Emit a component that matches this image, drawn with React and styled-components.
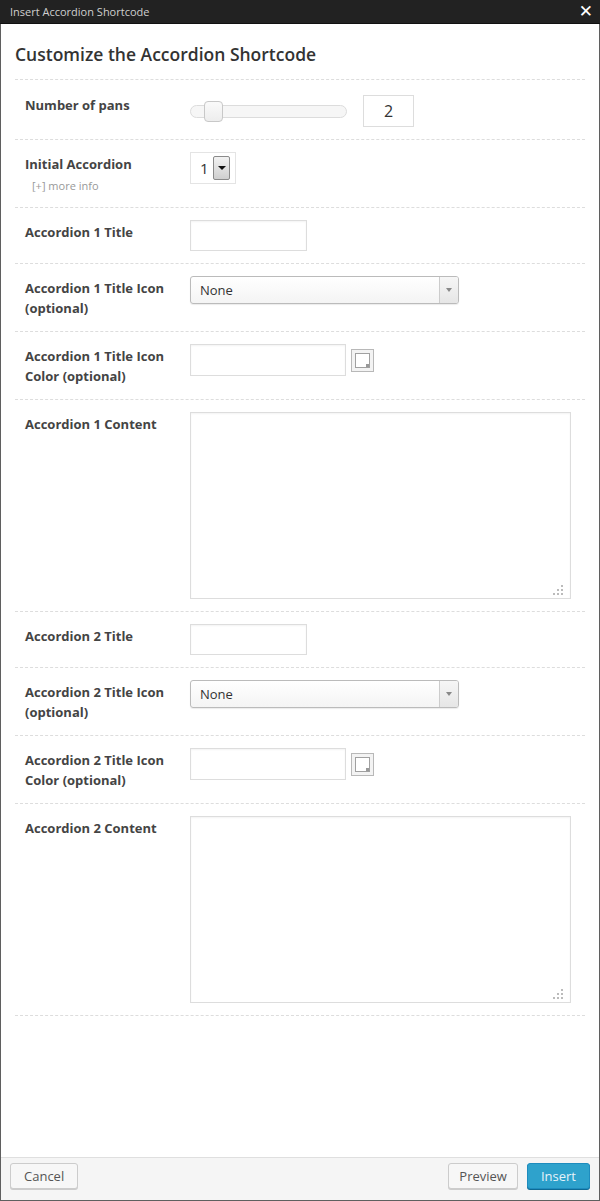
import React from "react";
import styled, { createGlobalStyle } from "styled-components";

const GlobalStyle = createGlobalStyle`
  html, body {
    margin: 0;
    padding: 0;
    background: #fff;
  }
  * {
    box-sizing: border-box;
  }
`;

const Dialog = styled.div`
  width: 600px;
  height: 1201px;
  display: flex;
  flex-direction: column;
  border: 1px solid #5f5f5f;
  border-top: none;
  font-family: "Open Sans", "Liberation Sans", sans-serif;
  background: #fff;
`;

const TitleBar = styled.div`
  height: 24px;
  margin: 0 -1px;
  background: #222;
  border-bottom: 1px solid #111;
  display: flex;
  align-items: center;
  justify-content: space-between;
  padding: 0 7px 0 10px;
  color: #cfcfcf;
  font-size: 11px;
`;

const Close = styled.span`
  color: #fff;
  font-weight: 700;
  font-size: 17px;
  line-height: 1;
  font-family: "DejaVu Sans", sans-serif;
`;

const Body = styled.div`
  flex: 1;
  padding: 0 14px;
`;

const Heading = styled.h1`
  margin: 17px 0 12px;
  font-size: 17.5px;
  line-height: 26px;
  font-weight: 600;
  color: #333;
`;

const Row = styled.div`
  display: flex;
  align-items: flex-start;
  padding: ${(p) => (p.$top ? p.$top : 12)}px 0 12px;
  border-top: 1px dashed #ddd;
  &:last-child {
    border-bottom: 1px dashed #ddd;
  }
`;

const LabelCol = styled.div`
  width: 175px;
  flex-shrink: 0;
  padding-left: 10px;
  padding-top: ${(p) => (p.$top !== undefined ? p.$top : 2)}px;
  padding-bottom: 1px;
`;

const Label = styled.div`
  font-size: 13px;
  line-height: 20px;
  font-weight: 700;
  color: #444;
`;

const MoreInfo = styled.div`
  margin-top: 4px;
  padding-left: 7px;
  font-size: 11px;
  line-height: 16px;
  color: #999;
`;

const Controls = styled.div`
  display: flex;
  align-items: center;
  gap: 5px;
`;

const SliderTrack = styled.div`
  position: relative;
  width: 157px;
  height: 13px;
  margin-right: 11px;
  border: 1px solid #dcdcdc;
  border-radius: 7px;
  background: #f6f6f6;
`;

const SliderHandle = styled.div`
  position: absolute;
  left: 13px;
  top: -5px;
  width: 19px;
  height: 21px;
  border: 1px solid #c8c8c8;
  border-radius: 4px;
  background: linear-gradient(#fafafa, #ededed);
`;

const NumberBox = styled.div`
  width: 51px;
  height: 32px;
  border: 1px solid #ddd;
  display: flex;
  align-items: center;
  justify-content: center;
  font-size: 16px;
  color: #333;
`;

const MiniSelect = styled.div`
  width: 46px;
  height: 32px;
  border: 1px solid #e4e4e4;
  display: flex;
  align-items: center;
  justify-content: space-between;
  padding: 0 5px 0 9px;
  font-size: 15px;
  color: #333;
`;

const MiniButton = styled.div`
  width: 17px;
  height: 24px;
  border: 1px solid #8a8a8a;
  border-radius: 2px;
  background: linear-gradient(#f2f2f2, #cfcfcf);
  display: flex;
  align-items: center;
  justify-content: center;
  &::after {
    content: "";
    border-left: 4px solid transparent;
    border-right: 4px solid transparent;
    border-top: 4px solid #111;
  }
`;

const TextInput = styled.div`
  width: ${(p) => p.$w}px;
  height: ${(p) => p.$h || 31}px;
  border: 1px solid #ddd;
  box-shadow: inset 0 1px 2px rgba(0, 0, 0, 0.05);
  background: #fff;
`;

const dot = (x, y) =>
  `radial-gradient(circle, #bbb 1.1px, transparent 1.5px) ${x}px ${y}px / 4px 4px no-repeat`;

const TextArea = styled(TextInput)`
  position: relative;
  &::after {
    content: "";
    position: absolute;
    right: 6px;
    bottom: 2px;
    width: 12px;
    height: 12px;
    background: ${[dot(8, 0), dot(4, 4), dot(8, 4), dot(0, 8), dot(4, 8), dot(8, 8)].join(", ")};
  }
`;

const Select = styled.div`
  width: 269px;
  height: 28px;
  display: flex;
  border: 1px solid #bbb;
  border-radius: 3px;
  background: linear-gradient(#fff, #f4f4f4);
  box-shadow: 0 1px 1px rgba(0, 0, 0, 0.08);
  overflow: hidden;
`;

const SelectValue = styled.div`
  flex: 1;
  padding-left: 9px;
  font-size: 13px;
  line-height: 26px;
  color: #333;
`;

const SelectArrow = styled.div`
  width: 19px;
  border-left: 1px solid #ccc;
  background: linear-gradient(#f6f6f6, #e6e6e6);
  display: flex;
  align-items: center;
  justify-content: center;
  &::after {
    content: "";
    border-left: 3px solid transparent;
    border-right: 3px solid transparent;
    border-top: 4px solid #888;
  }
`;

const ColorButton = styled.div`
  width: 23px;
  height: 23px;
  border: 1px solid #b8b8b8;
  background: #f3f3f3;
  padding: 3px;
`;

const ColorSwatch = styled.div`
  position: relative;
  width: 100%;
  height: 100%;
  border: 1px solid #a0a0a0;
  background: #fff;
  &::after {
    content: "";
    position: absolute;
    right: 0;
    bottom: 0;
    width: 3px;
    height: 3px;
    background: #999;
  }
`;

const Footer = styled.div`
  height: 43px;
  border-top: 1px solid #dfdfdf;
  background: #f5f5f5;
  display: flex;
  align-items: flex-start;
  padding: 5px 9px 0;
  gap: 9px;
`;

const Button = styled.button`
  height: 26px;
  padding: 0 ${(p) => p.$pad || 13}px;
  border: 1px solid ${(p) => (p.$primary ? "#1e8cbe" : "#ccc")};
  border-radius: 3px;
  background: ${(p) => (p.$primary ? "#2ea2cc" : "#f7f7f7")};
  box-shadow: 0 1px 0 ${(p) => (p.$primary ? "#0e6a94" : "#ccc")};
  color: ${(p) => (p.$primary ? "#e6f3fa" : "#555")};
  font-family: "Open Sans", "Liberation Sans", sans-serif;
  font-size: 13px;
  line-height: 24px;
  &:first-child {
    margin-right: auto;
  }
`;

function AccordionFields({ n }) {
  return (
    <>
      <Row>
        <LabelCol>
          <Label>Accordion {n} Title</Label>
        </LabelCol>
        <TextInput $w={117} />
      </Row>
      <Row>
        <LabelCol>
          <Label>
            Accordion {n} Title Icon
            <br />
            (optional)
          </Label>
        </LabelCol>
        <Select>
          <SelectValue>None</SelectValue>
          <SelectArrow />
        </Select>
      </Row>
      <Row>
        <LabelCol>
          <Label>
            Accordion {n} Title Icon
            <br />
            Color (optional)
          </Label>
        </LabelCol>
        <Controls>
          <TextInput $w={156} $h={32} />
          <ColorButton>
            <ColorSwatch />
          </ColorButton>
        </Controls>
      </Row>
      <Row>
        <LabelCol>
          <Label>Accordion {n} Content</Label>
        </LabelCol>
        <TextArea $w={381} $h={187} />
      </Row>
    </>
  );
}

export default function App() {
  return (
    <>
      <GlobalStyle />
      <Dialog>
        <TitleBar>
          <span>Insert Accordion Shortcode</span>
          <Close>✕</Close>
        </TitleBar>
        <Body>
          <Heading>Customize the Accordion Shortcode</Heading>
          <div>
            <Row $top={15}>
              <LabelCol $top={0}>
                <Label>Number of pans</Label>
              </LabelCol>
              <Controls>
                <SliderTrack>
                  <SliderHandle />
                </SliderTrack>
                <NumberBox>2</NumberBox>
              </Controls>
            </Row>
            <Row>
              <LabelCol>
                <Label>Initial Accordion</Label>
                <MoreInfo>[+] more info</MoreInfo>
              </LabelCol>
              <MiniSelect>
                1<MiniButton />
              </MiniSelect>
            </Row>
            <AccordionFields n={1} />
            <AccordionFields n={2} />
          </div>
        </Body>
        <Footer>
          <Button>Cancel</Button>
          <Button $pad={10}>Preview</Button>
          <Button $primary>Insert</Button>
        </Footer>
      </Dialog>
    </>
  );
}
